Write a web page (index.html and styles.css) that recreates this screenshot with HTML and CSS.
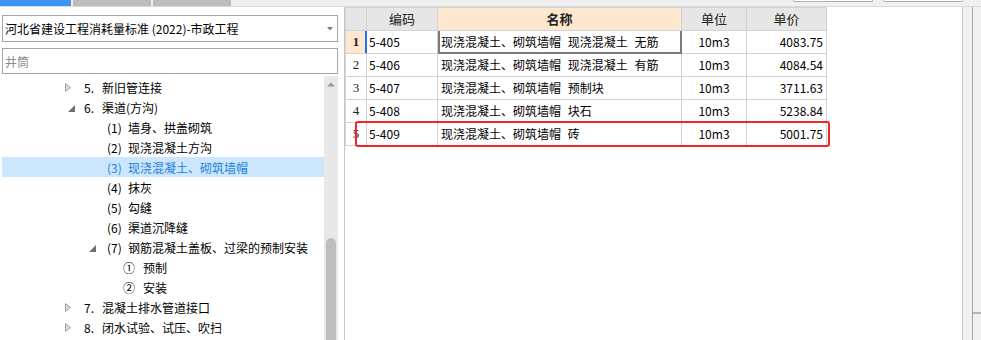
FILE: index.html
```html
<!DOCTYPE html>
<html lang="zh-CN">
<head>
    <meta charset="UTF-8">
    <meta name="viewport" content="width=device-width, initial-scale=1.0">
    <title>定额库</title>
    <link rel="stylesheet" href="styles.css">
</head>
<body>
    <!-- top strip: tabs + cut-off tool buttons -->
    <div class="topbar">
        <div class="tabs">
            <span class="tab active"></span>
            <span class="tab"></span>
            <span class="tab"></span>
        </div>
        <div class="tools">
            <span class="tool-btn"></span>
            <span class="tool-btn"></span>
        </div>
    </div>

    <div class="main">
        <!-- library + chapter tree -->
        <div class="left-panel">
            <div class="combo">
                <span>河北省建设工程消耗量标准 (2022)-市政工程</span>
                <svg class="combo-arrow" width="6" height="4" viewBox="0 0 6 4"><path d="M0 0 H6 L3 3.5 Z" fill="#7a7a7a"/></svg>
            </div>
            <input class="search" type="text" placeholder="井筒">

            <div class="tree">
                <ul class="tree-list">
                    <li class="row lvl1"><span class="tg"><svg class="closed" width="6" height="9" viewBox="0 0 6 9"><path d="M0.5 0.5 L5.5 4.5 L0.5 8.5 Z" fill="#dcdcdc" stroke="#a0a0a0"/></svg></span><span class="num">5.</span>新旧管连接</li>
                    <li class="row lvl1"><span class="tg"><svg class="open" width="7" height="7" viewBox="0 0 7 7"><path d="M7 0 V7 H0 Z" fill="#6e6e6e"/></svg></span><span class="num">6.</span>渠道(方沟)</li>
                    <li class="row lvl2"><span class="tg"></span><span class="num">(1)</span>墙身、拱盖砌筑</li>
                    <li class="row lvl2"><span class="tg"></span><span class="num">(2)</span>现浇混凝土方沟</li>
                    <li class="row lvl2 selected"><span class="tg"></span><span class="num">(3)</span>现浇混凝土、砌筑墙帽</li>
                    <li class="row lvl2"><span class="tg"></span><span class="num">(4)</span>抹灰</li>
                    <li class="row lvl2"><span class="tg"></span><span class="num">(5)</span>勾缝</li>
                    <li class="row lvl2"><span class="tg"></span><span class="num">(6)</span>渠道沉降缝</li>
                    <li class="row lvl2"><span class="tg"><svg class="open" width="7" height="7" viewBox="0 0 7 7"><path d="M7 0 V7 H0 Z" fill="#6e6e6e"/></svg></span><span class="num">(7)</span>钢筋混凝土盖板、过梁的预制安装</li>
                    <li class="row lvl3"><span class="tg"></span><span class="num">①</span>预制</li>
                    <li class="row lvl3"><span class="tg"></span><span class="num">②</span>安装</li>
                    <li class="row lvl1"><span class="tg"><svg class="closed" width="6" height="9" viewBox="0 0 6 9"><path d="M0.5 0.5 L5.5 4.5 L0.5 8.5 Z" fill="#dcdcdc" stroke="#a0a0a0"/></svg></span><span class="num">7.</span>混凝土排水管道接口</li>
                    <li class="row lvl1"><span class="tg"><svg class="closed" width="6" height="9" viewBox="0 0 6 9"><path d="M0.5 0.5 L5.5 4.5 L0.5 8.5 Z" fill="#dcdcdc" stroke="#a0a0a0"/></svg></span><span class="num">8.</span>闭水试验、试压、吹扫</li>
                </ul>
                <div class="scrollbar">
                    <div class="scroll-up"><svg width="8" height="5" viewBox="0 0 8 5"><path d="M0 4.5 L4 0.5 L8 4.5 Z" fill="#9a9a9a"/></svg></div>
                    <div class="thumb"></div>
                </div>
            </div>
        </div>

        <!-- quota items -->
        <div class="right-panel">
            <div class="grid">
                <div class="hd"></div>
                <div class="hd">编码</div>
                <div class="hd hd-active">名称</div>
                <div class="hd">单位</div>
                <div class="hd">单价</div>

                <div class="rn rn-active">1</div>
                <div class="code">5-405</div>
                <div class="name cur">现浇混凝土、砌筑墙帽 现浇混凝土 无筋</div>
                <div class="unit">10m3</div>
                <div class="price">4083.75</div>

                <div class="rn">2</div>
                <div class="code">5-406</div>
                <div class="name">现浇混凝土、砌筑墙帽 现浇混凝土 有筋</div>
                <div class="unit">10m3</div>
                <div class="price">4084.54</div>

                <div class="rn">3</div>
                <div class="code">5-407</div>
                <div class="name">现浇混凝土、砌筑墙帽 预制块</div>
                <div class="unit">10m3</div>
                <div class="price">3711.63</div>

                <div class="rn">4</div>
                <div class="code">5-408</div>
                <div class="name">现浇混凝土、砌筑墙帽 块石</div>
                <div class="unit">10m3</div>
                <div class="price">5238.84</div>

                <div class="rn">5</div>
                <div class="code">5-409</div>
                <div class="name">现浇混凝土、砌筑墙帽 砖</div>
                <div class="unit">10m3</div>
                <div class="price">5001.75</div>

                <!-- red annotation box -->
                <div class="mark"></div>
            </div>
        </div>

        <div class="gutter">
            <div class="rail"><div class="rail-split"></div></div>
        </div>
    </div>
</body>
</html>
```

FILE: styles.css
```css
html, body {
    height: 340px;
}
body {
    margin: 0;
    overflow: hidden;
    background: #f0f0f0;
    font-family: "Noto Sans CJK SC", "Liberation Sans", sans-serif;
    font-size: 12px;
    color: #000;
}
.topbar {
    height: 6px;
    border-bottom: 1px solid #dadada;
    display: flex;
    justify-content: space-between;
    padding-right: 18px;
}
.tabs {
    display: flex;
    gap: 2px;
}
.tab {
    width: 78px;
    height: 6px;
    background: #bdbdbd;
}
.tab.active {
    width: 71px;
    background: #3c95f4;
}
.tools {
    display: flex;
    gap: 10px;
}
.tool-btn {
    width: 78px;
    height: 1px;
    background: #fff;
    border: 1px solid #adadad;
    border-top: none;
    border-radius: 0 0 3px 3px;
}
.main {
    display: flex;
    height: 333px;
}
.left-panel {
    width: 344px;
    box-sizing: border-box;
    padding: 8px 6px 0 2px;
    background: #fff;
    display: flex;
    flex-direction: column;
}
.combo {
    height: 27px;
    box-sizing: border-box;
    border: 1px solid #a5a5a5;
    padding-left: 2px;
    display: flex;
    align-items: center;
    white-space: nowrap;
}
.combo-arrow {
    margin-left: auto;
    margin-right: 4px;
}
.search {
    margin: 6px 0 0;
    height: 26px;
    width: 100%;
    box-sizing: border-box;
    border: 1px solid #a5a5a5;
    padding: 0 2px;
    font-family: inherit;
    font-size: 12px;
    outline: none;
}
.search::placeholder {
    color: #8c8c8c;
}
.tree {
    margin-top: 2px;
    flex: 1;
    display: flex;
    overflow: hidden;
}
.tree-list {
    list-style: none;
    margin: 0;
    padding: 1px 0 0;
    flex: 1;
}
.row {
    height: 20px;
    display: flex;
    align-items: center;
    white-space: nowrap;
}
.lvl1 { padding-left: 60px; }
.lvl2 { padding-left: 83px; }
.lvl3 { padding-left: 99px; }
.tg {
    width: 22px;
    flex: none;
    display: flex;
    align-items: center;
}
.tg .closed { margin-left: 3px; }
.tg .open { margin-left: 6px; margin-top: 3px; }
.lvl2 .tg .open { margin-left: 4px; }
.num { flex: none; }
.lvl1 .num { width: 18px; }
.lvl2 .num { width: 21px; }
.lvl3 .num { width: 20px; }
.row.selected {
    background: #cce7fd;
    color: #1c7fdc;
}
.scrollbar {
    width: 14px;
    flex: none;
    background: #e8e8e8;
}
.scroll-up {
    height: 11px;
    display: flex;
    align-items: flex-end;
    justify-content: center;
}
.thumb {
    margin: 151px 2px 0;
    height: 120px;
    background: #bdbdbd;
    border-radius: 5px 5px 0 0;
}
.right-panel {
    width: 619px;
    box-sizing: border-box;
    border-left: 1px solid #c8c8c8;
    border-right: 1px solid #c8c8c8;
    background: #fff;
}
/* track sizes include each cell's right/bottom border */
.grid {
    position: relative;
    width: max-content;
    display: grid;
    grid-template-columns: 21px 71px 244px 65px 80px;
    grid-auto-rows: 23px;
    border-left: 1px solid #d3d3d3;
    border-top: 1px solid #d3d3d3;
}
.grid > div {
    border-right: 1px solid #d3d3d3;
    border-bottom: 1px solid #d3d3d3;
    line-height: 22px;
    white-space: nowrap;
    overflow: hidden;
}
.hd {
    background: #e6e6e6;
    text-align: center;
    font-size: 13px;
    color: #222;
}
.hd-active {
    background: #fde8cf;
    font-weight: bold;
}
.rn {
    font-family: "Liberation Serif", serif;
    font-size: 13px;
    text-align: center;
    color: #222;
}
.grid > .rn-active {
    background: #fde8cf;
    font-weight: bold;
    border-right-color: #1a73e8;
    box-shadow: inset -1px 0 #1a73e8;
}
.code {
    padding-left: 2px;
}
.name {
    padding-left: 3px;
    word-spacing: 4px;
}
.grid > .cur {
    border-right-color: #7a7a7a;
    border-bottom-color: #7a7a7a;
    box-shadow: inset 2px 0 #7a7a7a, inset -1px 0 #7a7a7a, inset 0 -1px #7a7a7a;
}
.unit {
    text-align: center;
}
.price {
    text-align: right;
    padding-right: 3px;
}
.grid > .mark {
    position: absolute;
    left: 9px;
    top: 113px;
    width: 475px;
    height: 26px;
    box-sizing: border-box;
    border: 2px solid #f32424;
    border-radius: 3px;
}
.gutter {
    flex: 1;
    display: flex;
}
.rail {
    flex: 1;
    margin-left: 9px;
    border-left: 1px solid #a3a3a3;
}
.rail-split {
    margin-top: 305px;
    border-top: 2px solid #b5b5b5;
}
```
